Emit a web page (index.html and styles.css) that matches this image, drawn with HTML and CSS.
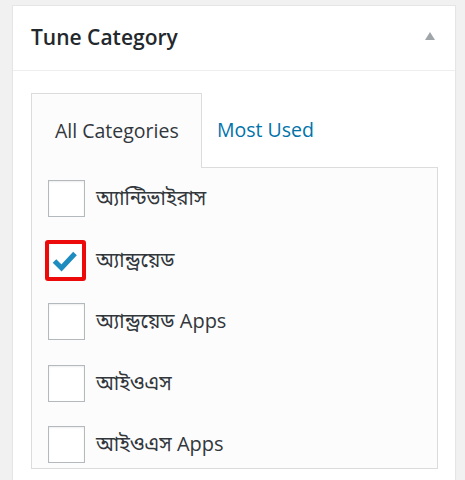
FILE: index.html
```html
<!DOCTYPE html>
<html lang="bn">
<head>
<meta charset="utf-8">
<link rel="stylesheet" href="styles.css">
</head>
<body>
<div class="postbox">
  <div class="hndle">
    <h2 class="title">Tune Category</h2>
    <span class="toggle"></span>
  </div>
  <div class="inside">
    <ul class="tabs">
      <li class="tab active">All Categories</li>
      <li class="tab link">Most Used</li>
    </ul>
    <div class="panel">
      <ul class="checklist">
        <li class="row"><span class="cb"></span><span class="lbl">অ্যান্টিভাইরাস</span></li>
        <li class="row"><span class="cb checked"><svg class="check" viewBox="0 0 26 21" width="26" height="21"><path d="M2.5 10 L9.5 17 L23 2.5" fill="none" stroke="#1e8cbe" stroke-width="5" stroke-linecap="butt" stroke-linejoin="miter"/></svg></span><span class="lbl">অ্যান্ড্রয়েড</span></li>
        <li class="row"><span class="cb"></span><span class="lbl">অ্যান্ড্রয়েড Apps</span></li>
        <li class="row"><span class="cb"></span><span class="lbl">আইওএস</span></li>
        <li class="row"><span class="cb"></span><span class="lbl">আইওএস Apps</span></li>
      </ul>
    </div>
  </div>
</div>
</body>
</html>
```

FILE: styles.css
```css
html, body {
  margin: 0;
  padding: 0;
  background: #f1f1f1;
  height: 480px;
  overflow: hidden;
}
body {
  font-family: "Open Sans", "Noto Sans Bengali", "Noto Sans", sans-serif;
  color: #32373c;
}
.postbox {
  margin: 5px 0 0 12px;
  width: 444px;
  box-sizing: border-box;
  border: 1px solid #e5e5e5;
  background: #fff;
  box-shadow: 0 1px 1px rgba(0,0,0,0.04);
  height: 490px;
}
.hndle {
  height: 64px;
  border-bottom: 1px solid #eee;
  display: flex;
  align-items: center;
  justify-content: space-between;
  padding: 0 20px 0 18px;
}
.title {
  margin: 0;
  font-size: 21px;
  font-weight: 600;
  color: #23282d;
  line-height: 1;
  padding-bottom: 2px;
}
.toggle {
  width: 0;
  height: 0;
  border-left: 5.5px solid transparent;
  border-right: 5.5px solid transparent;
  border-bottom: 8px solid #a0a5aa;
  margin-bottom: 4px;
}
.inside {
  padding: 22px 17px 0 18px;
}
.tabs {
  list-style: none;
  margin: 0;
  padding: 0;
  display: flex;
  height: 74px;
}
.tab {
  font-size: 19.5px;
  display: flex;
  align-items: center;
  box-sizing: border-box;
  height: 75px;
  padding-bottom: 2px;
}
.tab.active {
  width: 171px;
  padding-left: 23px;
  border: 1px solid #dcdcdc;
  border-bottom: none;
  background: #fcfcfc;
  color: #32373c;
  position: relative;
  z-index: 1;
}
.tab.link {
  padding-left: 15px;
  color: #0073aa;
}
.panel {
  box-sizing: border-box;
  width: 407px;
  height: 302px;
  border: 1px solid #dcdcdc;
  background: #fcfcfc;
  padding: 12px 0 0 16px;
  overflow: hidden;
}
.checklist {
  list-style: none;
  margin: 0;
  padding: 0;
}
.row {
  display: flex;
  height: 61.5px;
  align-items: flex-start;
}
.cb {
  box-sizing: border-box;
  width: 37px;
  height: 37px;
  flex: none;
  border: 1px solid #b4b9be;
  background: #fff;
  box-shadow: inset 0 1px 2px rgba(0,0,0,0.07);
  position: relative;
  display: flex;
  align-items: center;
  justify-content: center;
}
.cb.checked::after {
  content: "";
  position: absolute;
  left: -4px;
  top: -3px;
  right: -2px;
  bottom: -3px;
  border: 4px solid #ec0a0a;
  border-radius: 3px;
}
.check {
  margin-top: 2px;
  margin-left: -3px;
}
.lbl {
  margin-left: 11px;
  font-size: 20px;
  line-height: 36px;
  color: #32373c;
  white-space: nowrap;
}
```
